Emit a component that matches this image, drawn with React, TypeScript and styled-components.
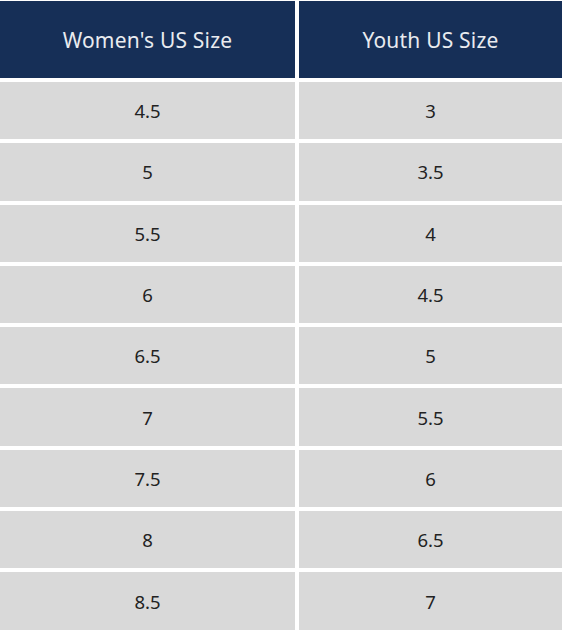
import React from 'react';
import styled, { createGlobalStyle } from 'styled-components';

const GlobalStyle = createGlobalStyle`
  html, body {
    margin: 0;
    padding: 0;
    background: #fff;
  }
`;

const SizeGrid = styled.div`
  display: grid;
  grid-template-columns: 295px 263px;
  grid-template-rows: 77px;
  grid-auto-rows: 57.3px;
  column-gap: 4px;
  row-gap: 4px;
  padding-top: 1px;
  width: 564px;
  font-family: "Noto Sans", "Open Sans", sans-serif;
`;

const HeadCell = styled.div`
  display: flex;
  align-items: center;
  justify-content: center;
  background: #162f57;
  color: #e9ebef;
  font-size: 21px;
  letter-spacing: 0.2px;
`;

const Cell = styled.div`
  display: flex;
  align-items: center;
  justify-content: center;
  background: #d9d9d9;
  color: #222;
  font-size: 18.5px;
`;

const sizes: [string, string][] = [
  ['4.5', '3'],
  ['5', '3.5'],
  ['5.5', '4'],
  ['6', '4.5'],
  ['6.5', '5'],
  ['7', '5.5'],
  ['7.5', '6'],
  ['8', '6.5'],
  ['8.5', '7'],
];

export default function App() {
  return (
    <>
      <GlobalStyle />
      <SizeGrid>
        <HeadCell>Women's US Size</HeadCell>
        <HeadCell>Youth US Size</HeadCell>
        {sizes.map(([women, youth]) => (
          <React.Fragment key={women}>
            <Cell>{women}</Cell>
            <Cell>{youth}</Cell>
          </React.Fragment>
        ))}
      </SizeGrid>
    </>
  );
}
